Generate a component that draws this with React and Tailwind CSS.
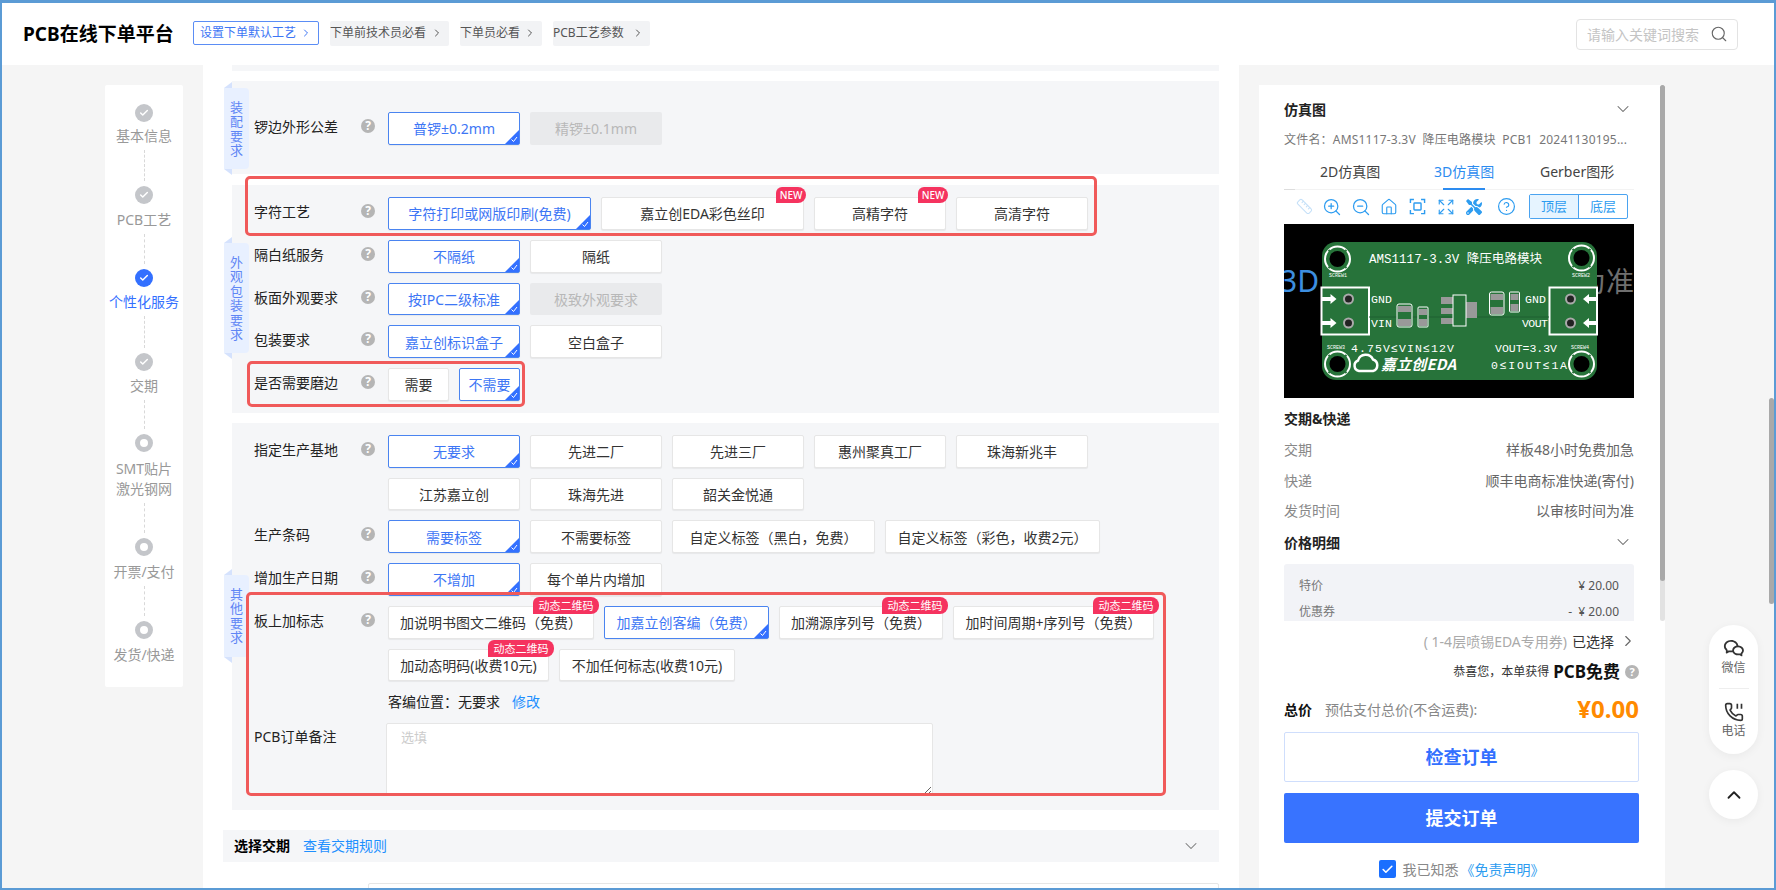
import { ChevronDown, ChevronRight, ChevronUp, CircleHelp, Expand, House, Ruler, Search, ZoomIn, ZoomOut, Check } from "lucide-react";
import { FaTools } from "react-icons/fa";
import { RiWechatLine } from "react-icons/ri";

const STEPS = [
  { lines: ["基本信息"], state: "done", lab: "mt-[4px]", dash: "h-[31px]" },
  { lines: ["PCB工艺"], state: "done", lab: "mt-[6px]", dash: "h-[30px]" },
  { lines: ["个性化服务"], state: "active", lab: "mt-[5px]", dash: "h-[32px]" },
  { lines: ["交期"], state: "done", lab: "mt-[5px]", dash: "h-[29px]" },
  { lines: ["SMT贴片", "激光钢网"], state: "todo", lab: "mt-[7px]", dash: "h-[30px]" },
  { lines: ["开票/支付"], state: "todo", lab: "mt-[6px]", dash: "h-[30px]" },
  { lines: ["发货/快递"], state: "todo", lab: "mt-[6px]" },
];

function Step({ step }) {
  return (
    <div className="flex flex-col items-center">
      {step.state === "todo" ? (
        <div className="w-[18px] h-[18px] rounded-full border-[5px] border-[#c4c6ca] bg-white" />
      ) : (
        <div className={`w-[18px] h-[18px] rounded-full flex items-center justify-center ${step.state === "active" ? "bg-[#3370ff]" : "bg-[#c4c6ca]"}`}>
          <Check size={10} strokeWidth={3.5} className="text-white" />
        </div>
      )}
      <div className={`${step.lab} text-[14px] leading-[20px] text-center ${step.state === "active" ? "text-[#3370ff]" : "text-[#999]"}`}>
        {step.lines.map((l) => <div key={l}>{l}</div>)}
      </div>
      {step.dash && <div className={`mt-[4px] mb-[5px] border-l border-dashed border-[#d8d8d8] ${step.dash}`} />}
    </div>
  );
}

function Help() {
  return (
    <span className="w-[14px] h-[14px] rounded-full bg-[#b5b5b5] text-white text-[12px] leading-[14px] font-bold text-center shrink-0 -mt-[4px]">?</span>
  );
}

function Opt({ text, w = "w-[132px]", sel, off, badge, isNew }) {
  let tone = "bg-white border border-[#e6e6e6] text-[#333] shadow-[0_1px_1px_rgba(0,0,0,0.06)]";
  if (sel) tone = "bg-white border border-[#4a84f0] text-[#3d76f5] shadow-[0_1px_1px_rgba(0,0,0,0.06)]";
  if (off) tone = "bg-[#e9eaec] text-[#b8b8b8]";
  return (
    <div className={`relative h-[32.75px] flex items-center justify-center text-[14px] whitespace-nowrap rounded-[2px] ${w} ${tone}`}>
      <span className="mt-[1px]">{text}</span>
      {sel && (
        <svg width="14" height="14" viewBox="0 0 14 14" className="absolute right-0 bottom-0">
          <polygon points="14,0 14,14 0,14" fill="#3370ff" />
          <path d="M6.5 9.5l2 2 3.500-4.500" fill="none" stroke="#fff" strokeWidth="1" />
        </svg>
      )}
      {badge && (
        <span className="absolute -top-[10px] -right-[6px] w-[66px] h-[17px] bg-[#f5335f] text-white text-[11px] leading-[17px] text-center rounded-tl-[6px] rounded-tr-[8px] rounded-br-[8px]">动态二维码</span>
      )}
      {isNew && (
        <span className="absolute -top-[11px] -right-[3px] w-[30px] h-[16px] bg-[#f5335f] text-white text-[10px] font-medium leading-[16px] text-center rounded-tl-[6px] rounded-tr-[8px] rounded-br-[8px]">NEW</span>
      )}
    </div>
  );
}

function Row({ label, opts }) {
  return (
    <div className="flex pl-[22px]">
      <div className="w-[107px] shrink-0 text-[14px] leading-[29px] text-[#222]">{label}</div>
      <div className="w-[14px] h-[32px] shrink-0 flex items-center"><Help /></div>
      <div className="ml-[13px] flex flex-wrap gap-[10px] flex-1">
        {opts.map((o) => <Opt key={o.text} {...o} />)}
      </div>
    </div>
  );
}

function SideTab({ chars, pos, both }) {
  return (
    <div className={`absolute -left-[8px] w-[25px] bg-[#e8f0ff] rounded-r-[4px] flex flex-col items-center justify-center text-[13px] leading-[14.5px] text-[#5f86f5] ${pos}`}>
      <span className="absolute left-0 -top-[6px] w-0 h-0 border-l-[8px] border-l-transparent border-b-[6px] border-b-[#d5e2fd]" />
      {both && <span className="absolute left-0 -bottom-[6px] w-0 h-0 border-l-[8px] border-l-transparent border-t-[6px] border-t-[#d5e2fd]" />}
      {chars.split("").map((c, i) => <span key={i}>{c}</span>)}
    </div>
  );
}

function Screw({ x, y }) {
  return (
    <g>
      <circle cx={x} cy={y} r="12.5" fill="none" stroke="#fff" strokeWidth="2" />
      <circle cx={x} cy={y} r="8" fill="#000" />
      <path d={`M${x - 9} ${y - 9}l3 3M${x + 9} ${y - 9}l-3 3M${x - 9} ${y + 9}l3 -3M${x + 9} ${y + 9}l-3 -3`} stroke="#27733a" strokeWidth="2" />
    </g>
  );
}

function Terminal({ x, left }) {
  const pad = left ? x + 27 : x + 21;
  return (
    <g>
      <rect x={x} y="63.5" width="47.5" height="47" fill="none" stroke="#fff" strokeWidth="2" />
      {[75, 99].map((y) => (
        <g key={y}>
          {left ? (
            <path d={`M${x} ${y - 2}h9v-3l6 5l-6 5v-3h-9z`} fill="#fff" />
          ) : (
            <path d={`M${x + 47.5} ${y - 2}h-8v-3l-6 5l6 5v-3h8z`} fill="#fff" />
          )}
          <circle cx={pad} cy={y} r="4.5" fill="#222" stroke="#aaa" strokeWidth="2" />
        </g>
      ))}
    </g>
  );
}

function PcbBoard() {
  const pcbText = { fill: "#fff", fontFamily: "'Liberation Mono','Noto Sans CJK SC',monospace" };
  return (
    <svg viewBox="0 0 350 174" className="w-[350px] h-[174px] block bg-black">
      <text x="-4" y="68" fontSize="30" fill="#3d8fe0" fontFamily="'Noto Sans',sans-serif">3D</text>
      <text x="294" y="68" fontSize="28" fill="#6f6f6f" fontFamily="'Noto Sans CJK SC',sans-serif">为准</text>
      <rect x="38" y="18" width="275" height="138" rx="14" fill="#27733a" />
      <text x="85" y="39" fontSize="12" textLength="173" lengthAdjust="spacingAndGlyphs" style={pcbText}>AMS1117-3.3V 降压电路模块</text>
      <Screw x={53.5} y={35} />
      <Screw x={297.5} y={34} />
      <Screw x={53.5} y={140} />
      <Screw x={297.5} y={140} />
      <g fontSize="5" style={pcbText}>
        <text x="45" y="53">SCREW1</text>
        <text x="288" y="53">SCREW2</text>
        <text x="43" y="125">SCREW3</text>
        <text x="287" y="125">SCREW4</text>
      </g>
      <Terminal x={37.5} left />
      <Terminal x={265.5} />
      <g fontSize="11.5" style={pcbText}>
        <text x="87" y="79" textLength="21">GND</text>
        <text x="87" y="103" textLength="21">VIN</text>
        <text x="241" y="79" textLength="21">GND</text>
        <text x="238" y="103" textLength="26">VOUT</text>
      </g>
      <path d="M85 93h180" stroke="#1f6030" strokeWidth="1" />
      <rect x="113" y="80" width="15" height="23" rx="2" fill="#27733a" stroke="#fff" />
      <rect x="114" y="82" width="13" height="6" fill="#999" />
      <rect x="114" y="95" width="13" height="7" fill="#999" />
      <rect x="134" y="83" width="10" height="20" rx="1" fill="#27733a" stroke="#fff" />
      <rect x="135" y="85" width="8" height="6" fill="#999" />
      <rect x="135" y="95" width="8" height="7" fill="#999" />
      <g fill="#999">
        <rect x="157" y="73" width="12" height="7" />
        <rect x="157" y="84" width="12" height="6" />
        <rect x="157" y="94" width="12" height="6" />
        <rect x="182" y="78" width="11" height="16" />
      </g>
      <rect x="169" y="71" width="13" height="31" fill="#27733a" stroke="#fff" />
      <rect x="205.500" y="68" width="14.5" height="23" rx="2" fill="#27733a" stroke="#fff" />
      <rect x="206.5" y="70" width="12.5" height="6" fill="#999" />
      <rect x="206.5" y="83" width="12.5" height="7" fill="#999" />
      <rect x="225.5" y="68" width="10" height="20" rx="1" fill="#27733a" stroke="#fff" />
      <rect x="226.5" y="70" width="8" height="6" fill="#999" />
      <rect x="226.5" y="80" width="8" height="7" fill="#999" />
      <g fontSize="11.5" style={pcbText}>
        <text x="67" y="128" textLength="103">4.75V≤VIN≤12V</text>
        <text x="211" y="128" textLength="62">VOUT=3.3V</text>
        <text x="207" y="145" textLength="76">0≤IOUT≤1A</text>
      </g>
      <path d="M75 147a5.500 5.500 0 0 1 -1 -10.500a8 8 0 0 1 15 -1a6 6 0 0 1 0 11.500z" fill="none" stroke="#fff" strokeWidth="2.5" />
      <text x="97" y="146" fontSize="15" fontWeight="700" fontStyle="italic" textLength="75" style={{ fill: "#fff", fontFamily: "'Noto Sans CJK SC',sans-serif" }}>嘉立创EDA</text>
    </svg>
  );
}

function FocusIcon({ className }) {
  return (
    <svg width="17" height="17" viewBox="0 0 24 24" fill="none" stroke="currentColor" strokeWidth="2" className={className}>
      <path d="M7 2H2v5M17 2h5v5M7 22H2v-5M17 22h5v-5" />
      <rect x="7" y="7" width="10" height="10" rx="1" />
    </svg>
  );
}

function InfoRow({ k, v, cls }) {
  return (
    <div className={`flex justify-between h-[20px] leading-[20px] text-[14px] text-[#666] w-[350px] ${cls}`}>
      <span className="text-[#888]">{k}</span><span>{v}</span>
    </div>
  );
}

const HDR_LINKS = [
  { t: "下单前技术员必看", w: "w-[119px]" },
  { t: "下单员必看", w: "w-[82px]" },
  { t: "PCB工艺参数", w: "w-[97px]" },
];

export default function App() {
  return (
    <div className="relative w-[1776px] h-[890px] overflow-hidden border-t-[3px] border-x-2 border-b-2 border-[#5b9bd5] bg-[#f5f5f5] [font-family:'Noto_Sans','Noto_Sans_CJK_SC',sans-serif]">
      {/* header */}
      <div className="h-[62px] bg-white flex items-center pl-[21px] pr-[36px]">
        <div className="text-[19px] font-bold text-black w-[149px] whitespace-nowrap">PCB在线下单平台</div>
        <div className="ml-[21px] h-[24px] w-[126px] border border-[#5b8df5] rounded-[2px] flex items-center justify-center gap-[4px] text-[12px] text-[#3d76f5] -mt-[2px]">
          设置下单默认工艺<ChevronRight size={12} />
        </div>
        <div className="flex gap-[11px] ml-[11px] -mt-[2px]">
          {HDR_LINKS.map((l) => (
            <div key={l.t} className={`h-[25px] bg-[#f2f3f5] rounded-[2px] flex items-center justify-between pr-[6px] text-[12px] text-[#555] ${l.w}`}>
              {l.t}<ChevronRight size={12} />
            </div>
          ))}
        </div>
        <div className="ml-auto w-[162px] h-[31px] border border-[#e3e3e3] rounded-[4px] flex items-center justify-between pl-[10px] pr-[9px] text-[14px] text-[#c4c4c4]">
          请输入关键词搜索
          <Search size={18} strokeWidth={1.5} className="text-[#666]" />
        </div>
      </div>

      <div className="flex items-start h-[823px]">
        {/* steps */}
        <div className="ml-[103px] mt-[20px] w-[78px] h-[602px] bg-white rounded-[2px] pt-[19px] flex flex-col shrink-0">
          {STEPS.map((s) => <Step key={s.lines[0]} step={s} />)}
        </div>

        {/* main column */}
        <div className="relative ml-[20px] w-[1036px] h-full bg-white px-[20px] overflow-hidden shrink-0">
          <div className="ml-[9px] h-[6px] bg-[#f5f6f8] mb-[10px]" />

          <div className="relative ml-[9px] h-[93px] pt-[31px] bg-[#f5f6f8]">
            <SideTab chars="装配要求" pos="top-[7px] h-[81px]" both />
            <Row label="锣边外形公差" opts={[{ text: "普锣±0.2mm", sel: true }, { text: "精锣±0.1mm", off: true }]} />
          </div>

          <div className="relative ml-[9px] mt-[11px] pt-[12px] pb-[12px] bg-[#f5f6f8] flex flex-col gap-[10px]">
            <SideTab chars="外观包装要求" pos="top-[58px] h-[110px]" both />
            <Row label="字符工艺" opts={[
              { text: "字符打印或网版印刷(免费)", w: "w-[203px]", sel: true },
              { text: "嘉立创EDA彩色丝印", w: "w-[203px]", isNew: true },
              { text: "高精字符", isNew: true },
              { text: "高清字符" },
            ]} />
            <Row label="隔白纸服务" opts={[{ text: "不隔纸", sel: true }, { text: "隔纸" }]} />
            <Row label="板面外观要求" opts={[{ text: "按IPC二级标准", sel: true }, { text: "极致外观要求", off: true }]} />
            <Row label="包装要求" opts={[{ text: "嘉立创标识盒子", sel: true }, { text: "空白盒子" }]} />
            <Row label="是否需要磨边" opts={[{ text: "需要", w: "w-[61px]" }, { text: "不需要", w: "w-[61px]", sel: true }]} />
          </div>

          <div className="relative ml-[9px] mt-[10px] pt-[12px] pb-[14px] bg-[#f5f6f8] flex flex-col gap-[10px]">
            <SideTab chars="其他要求" pos="top-[152px] h-[82px]" both />
            <Row label="指定生产基地" opts={[
              { text: "无要求", sel: true }, { text: "先进二厂" }, { text: "先进三厂" }, { text: "惠州聚真工厂" },
              { text: "珠海新兆丰" }, { text: "江苏嘉立创" }, { text: "珠海先进" }, { text: "韶关金悦通" },
            ]} />
            <Row label="生产条码" opts={[
              { text: "需要标签", sel: true }, { text: "不需要标签" },
              { text: "自定义标签（黑白，免费）", w: "w-[203px]" },
              { text: "自定义标签（彩色，收费2元）", w: "w-[215px]" },
            ]} />
            <Row label="增加生产日期" opts={[{ text: "不增加", sel: true }, { text: "每个单片内增加" }]} />
            <Row label="板上加标志" opts={[
              { text: "加说明书图文二维码（免费）", w: "w-[206px]", badge: true },
              { text: "加嘉立创客编（免费）", w: "w-[165px]", sel: true },
              { text: "加溯源序列号（免费）", w: "w-[164px]", badge: true },
              { text: "加时间周期+序列号（免费）", w: "w-[201px]", badge: true },
              { text: "加动态明码(收费10元)", w: "w-[161px]", badge: true },
              { text: "不加任何标志(收费10元)", w: "w-[176px]" },
            ]} />
            <div className="mb-[2px] h-[20px] pl-[156px] flex items-center text-[14px] text-[#222]">
              客编位置：无要求<span className="ml-[12px] text-[#1e90ff]">修改</span>
            </div>
            <div className="flex pl-[22px]">
              <div className="w-[132px] shrink-0 text-[14px] leading-[28px] text-[#222]">PCB订单备注</div>
              <textarea readOnly placeholder="选填" className="w-[547px] h-[73px] bg-white border border-[#e6e6e6] rounded-[2px] px-[14px] py-[4px] text-[13px] placeholder:text-[#ccc]" />
            </div>
          </div>

          <div className="mt-[20px] h-[32px] bg-[#f5f6f8] flex items-center pl-[11px] pr-[18px] text-[14px]">
            <span className="font-bold text-black -mt-[2px]">选择交期</span>
            <span className="ml-[13px] text-[#1e90ff] -mt-[2px]">查看交期规则</span>
            <ChevronDown size={20} strokeWidth={1.25} className="ml-auto text-[#777]" />
          </div>
          <div className="mt-[21px] ml-[145px] h-[40px] border border-[#e6e6e6] bg-white rounded-[2px]" />

          {/* red annotation boxes */}
          <div className="absolute left-[42px] top-[111px] w-[852px] h-[60px] border-[3px] border-[#f05a5a] rounded-[5px]" />
          <div className="absolute left-[44px] top-[296px] w-[278px] h-[46px] border-[3px] border-[#f05a5a] rounded-[5px]" />
          <div className="absolute left-[43px] top-[527px] w-[920px] h-[204px] border-[3px] border-[#f05a5a] rounded-[5px]" />
        </div>

        {/* right panel */}
        <div className="relative ml-[20px] mt-[20px] w-[406px] h-[803px] bg-white pl-[25px] pt-[14px] shrink-0">
          <div className="absolute right-0 top-0 w-[5px] h-[536px] bg-[#e2e2e2] rounded-full">
            <div className="w-[5px] h-[496px] bg-[#a9a9a9] rounded-full" />
          </div>

          <div className="w-[350px] h-[20px] flex items-center justify-between text-[14px] font-bold text-[#222]">
            仿真图<ChevronDown size={20} strokeWidth={1.25} className="mr-[1px] text-[#666]" />
          </div>
          <div className="w-[350px] mt-[11px] h-[20px] leading-[20px] text-[12px] tracking-[0.2px] text-[#777] truncate">文件名：AMS1117-3.3V&nbsp;&nbsp;降压电路模块&nbsp;&nbsp;PCB1&nbsp;&nbsp;20241130195...</div>
          <div className="relative w-[350px] mt-[4px] h-[36px] flex items-center text-[14px] text-[#444] border-b border-[#f3f3f3]">
            <span className="absolute left-[36px]">2D仿真图</span>
            <span className="absolute left-[150px] text-[#2d8cf0]">3D仿真图</span>
            <span className="absolute left-[256px]">Gerber图形</span>
            <span className="absolute left-[159px] -bottom-px w-[42px] h-[2px] bg-[#2d8cf0]" />
            <span className="absolute left-0 -bottom-px w-[11px] h-px bg-[#ddd]" />
          </div>
          <div className="w-[350px] mt-[4px] h-[25px] flex items-center text-[#2d9cf0]">
            <Ruler size={17} strokeWidth={1.5} className="ml-[12px] text-[#c5e0f8]" />
            <ZoomIn size={20} strokeWidth={1.5} className="ml-[9px]" />
            <ZoomOut size={20} strokeWidth={1.5} className="ml-[9px]" />
            <House size={18} strokeWidth={1.5} className="ml-[9px]" />
            <FocusIcon className="ml-[11px]" />
            <Expand size={18} strokeWidth={1.5} className="ml-[11px]" />
            <FaTools size={16} className="ml-[11px]" />
            <CircleHelp size={19} strokeWidth={1.5} className="ml-[15px]" />
            <div className="ml-auto mr-[6px] w-[99px] h-[25px] flex border border-[#4aa3f0] rounded-[2px] text-[13px] leading-[23px] text-center">
              <div className="flex-1 bg-[#e6f4ff] border-r border-[#4aa3f0]">顶层</div>
              <div className="flex-1">底层</div>
            </div>
          </div>
          <div className="mt-[5px] w-[350px]"><PcbBoard /></div>

          <div className="mt-[11px] h-[20px] leading-[20px] text-[14px] font-bold text-[#222]">交期&amp;快递</div>
          <InfoRow cls="mt-[11px]" k="交期" v="样板48小时免费加急" />
          <InfoRow cls="mt-[11px]" k="快递" v="顺丰电商标准快递(寄付)" />
          <InfoRow cls="mt-[10px]" k="发货时间" v="以审核时间为准" />
          <div className="w-[350px] mt-[11px] h-[20px] flex items-center justify-between text-[14px] font-bold text-[#222]">
            价格明细<ChevronDown size={20} strokeWidth={1.25} className="mr-[1px] text-[#666]" />
          </div>
          <div className="w-[350px] mt-[12px] h-[57px] bg-[#f2f3f7] rounded-t-[3px] px-[15px] pt-[12px] overflow-hidden text-[12px] text-[#777]">
            <div className="flex justify-between h-[20px] leading-[20px]"><span>特价</span><span className="text-[#555]">¥ 20.00</span></div>
            <div className="flex justify-between h-[20px] leading-[20px] mt-[6px]"><span>优惠券</span><span className="text-[#555]">-&nbsp;&nbsp;¥ 20.00</span></div>
          </div>
          <div className="w-[350px] mt-[10px] h-[20px] flex items-center justify-end text-[14px] whitespace-nowrap">
            <span className="text-[#aaa]">( 1-4层喷锡EDA专用券)</span>
            <span className="ml-[5px] text-[#333]">已选择</span>
            <ChevronRight size={18} strokeWidth={1.5} className="ml-[5px] -mr-[3px] text-[#666]" />
          </div>
          <div className="w-[355px] mt-[11px] h-[20px] flex items-center justify-end text-[12px] text-[#333] whitespace-nowrap">
            恭喜您，本单获得<span className="ml-[4px] text-[17px] font-bold text-[#111]">PCB免费</span>
            <span className="ml-[5px] w-[14px] h-[14px] rounded-full bg-[#b5b5b5] text-white text-[11px] leading-[14px] font-bold text-center">?</span>
          </div>
          <div className="w-[355px] mt-[12px] h-[30px] flex items-center text-[14px]">
            <span className="font-bold text-[#111]">总价</span>
            <span className="ml-[13px] text-[#888]">预估支付总价(不含运费):</span>
            <span className="ml-auto text-[24px] font-bold text-[#ff8a00]">¥0.00</span>
          </div>
          <div className="w-[355px] mt-[8px] h-[50px] border border-[#cfdefc] rounded-[2px] flex items-center justify-center text-[18px] font-bold text-[#3370ff]">检查订单</div>
          <div className="w-[355px] mt-[11px] h-[50px] bg-[#3873ff] rounded-[2px] flex items-center justify-center text-[18px] font-bold text-white">提交订单</div>
          <div className="w-[355px] mt-[17px] h-[18px] flex items-center justify-center text-[14px]">
            <span className="w-[17px] h-[18px] bg-[#1a6fff] rounded-[2px] flex items-center justify-center">
              <Check size={13} strokeWidth={3} className="text-white" />
            </span>
            <span className="ml-[7px] text-[#888]">我已知悉</span>
            <span className="ml-[2px] text-[#2d9cf0]">《免责声明》</span>
          </div>
        </div>
      </div>

      {/* floating contact buttons */}
      <div className="absolute left-[1707px] top-[622px] w-[49px] h-[129px] bg-white rounded-[25px] shadow-[0_2px_10px_rgba(0,0,0,0.05)] flex flex-col items-center pt-[12px] text-[12px] text-[#666]">
        <RiWechatLine size={22} className="text-[#333]" />
        <div className="mt-[1px] leading-[16px]">微信</div>
        <div className="mt-[12px] w-[30px] h-px bg-[#eee]" />
        <svg width="20" height="20" viewBox="0 0 24 24" fill="none" stroke="#333" strokeWidth="2" className="mt-[13px]">
          <path d="M13.832 16.568a1 1 0 0 0 1.213-.303l.355-.465A2 2 0 0 1 17 15h3a2 2 0 0 1 2 2v3a2 2 0 0 1-2 2A18 18 0 0 1 2 4a2 2 0 0 1 2-2h3a2 2 0 0 1 2 2v3a2 2 0 0 1-.8 1.6l-.468.351a1 1 0 0 0-.292 1.233 14 14 0 0 0 6.392 6.384" />
          <path d="M16 2v6M21 2v6" />
        </svg>
        <div className="mt-[1px] leading-[16px]">电话</div>
      </div>
      <div className="absolute left-[1707px] top-[767px] w-[49px] h-[49px] bg-white rounded-full shadow-[0_2px_10px_rgba(0,0,0,0.05)] flex items-center justify-center">
        <ChevronUp size={22} strokeWidth={2} className="text-[#222]" />
      </div>

      {/* page scrollbar */}
      <div className="absolute right-0 top-[395px] w-[5px] h-[206px] bg-[#a9a9a9] rounded-full" />
    </div>
  );
}
